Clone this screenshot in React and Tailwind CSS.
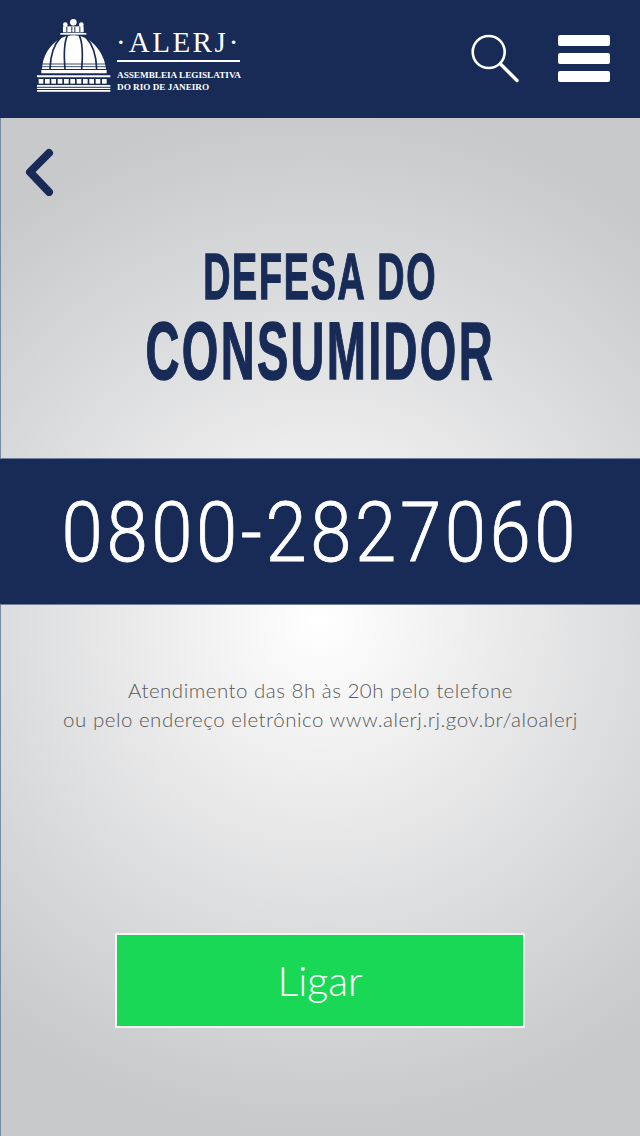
import React from "react";

function Dome() {
  return (
    <svg className="shrink-0 mt-[-10px]" width="84" height="80" viewBox="0 0 252 240" fill="#fff">
      <circle cx="124" cy="25" r="10" />
      <circle cx="100" cy="32" r="7" />
      <circle cx="148" cy="32" r="7" />
      <path d="M93 37h62v18H93z" />
      <path d="M85 57h78v5H85z" />
      <g fill="#172b56">
        <path d="M103 38h3v17h-3zM118 38h3v17h-3zM127 38h3v17h-3zM142 38h3v17h-3z" />
      </g>
      <path d="M30 165C32 112 74 64 124 64s92 48 98 101z" />
      <g fill="none" stroke="#172b56" strokeWidth="5">
        <path d="M106 65C94 90 96 130 99 165" />
        <path d="M142 65C154 90 152 130 149 165" />
        <path d="M86 70C62 95 55 130 54 165" />
        <path d="M162 70C186 95 193 130 194 165" />
      </g>
      <path d="M28 150h196" stroke="#172b56" strokeWidth="2.5" />
      <path d="M28 158h196" stroke="#172b56" strokeWidth="2.5" />
      <path d="M28 168h196v10H28z" />
      <path d="M15 184h220v6H15z" />
      {[20, 39, 58, 77, 96, 115, 134, 153, 172, 191, 210].map((x) => (
        <rect key={x} x={x} y="195" width="14" height="14" />
      ))}
      <path d="M15 213h220v5H15zM15 221h220v4H15zM15 228h220v5H15z" />
    </svg>
  );
}

export default function App() {
  return (
    <div className="w-[640px] h-[1136px] flex flex-col overflow-hidden bg-[radial-gradient(circle_at_320px_620px,#ffffff_0px,#ececed_170px,#d9dadb_340px,#c8c9cb_510px)]">
      <header className="h-[118px] shrink-0 bg-[#172b56] flex items-center pl-[32px] pr-[30px]">
        <Dome />
        <div className="w-[125px] flex flex-col items-stretch text-white font-['Liberation_Serif',serif] pt-[3px] mt-[-1px]">
          <div className="flex justify-between items-center text-[29px] leading-[30px] tracking-[2.5px] whitespace-nowrap">
            <span>·</span>
            <span>ALERJ</span>
            <span>·</span>
          </div>
          <div className="h-[2px] w-[123px] ml-px bg-white mt-[3px] mb-[7px]" />
          <div className="text-[9.2px] ml-px leading-[12px] font-bold whitespace-nowrap">ASSEMBLEIA LEGISLATIVA</div>
          <div className="text-[9.2px] ml-px leading-[12px] font-bold whitespace-nowrap">DO RIO DE JANEIRO</div>
        </div>
        <svg className="ml-auto mt-[-2px]" width="50" height="50" viewBox="0 0 50 50" fill="none" stroke="#fff" strokeLinecap="round">
          <circle cx="18.7" cy="19" r="16" strokeWidth="2.6" />
          <path d="M30.5 31l16.5 16.5" strokeWidth="3.4" />
        </svg>
        <div className="ml-[38px] w-[52px] flex flex-col gap-[7px] mt-[-1px]">
          <div className="h-[11px] rounded-[2px] bg-white" />
          <div className="h-[11px] rounded-[2px] bg-white" />
          <div className="h-[11px] rounded-[2px] bg-white" />
        </div>
      </header>

      <main className="flex-1 flex flex-col border-l border-[#7b8aa6]">
        <section className="h-[340px] relative flex flex-col items-center">
          <svg className="absolute left-[20px] top-[30px]" width="36" height="48" viewBox="0 0 36 48" fill="none" stroke="#172b56" strokeWidth="8" strokeLinecap="round" strokeLinejoin="round">
            <path d="M28 5L9 24l19 20" />
          </svg>
          <h1 className="mt-[121px] text-[#172b56] font-['Liberation_Sans',sans-serif] font-bold text-center uppercase [-webkit-text-stroke:1.4px_#172b56]">
            <div className="text-[65px] leading-[76px] tracking-[3px] scale-x-[0.58] whitespace-nowrap">Defesa do</div>
            <div className="text-[81px] leading-[72px] tracking-[4px] scale-x-[0.58] whitespace-nowrap">Consumidor</div>
          </h1>
        </section>
        <section className="h-[147px] -ml-px bg-[#172b56] border-y border-[#6f7f9c] flex items-center justify-center text-white font-['Roboto',sans-serif] font-light text-[84px] pt-[2px]">
          <span className="scale-x-[0.885] tracking-[4px] whitespace-nowrap [-webkit-text-stroke:0.8px_#ffffff]">0800-2827060</span>
        </section>
        <section className="flex-1 flex flex-col items-center">
          <p className="mt-[71px] text-center text-[#58595a] font-['Lato',sans-serif] font-light text-[20.5px] leading-[29px] tracking-[0.5px]">
            Atendimento das 8h às 20h pelo telefone
            <br />
            ou pelo endereço eletrônico www.alerj.rj.gov.br/aloalerj
          </p>
          <button className="mt-[199px] w-[410px] h-[95px] -ml-px bg-[#19d856] border-2 border-[#f2f5f2] text-white font-['Lato',sans-serif] font-light text-[41px]">
            Ligar
          </button>
        </section>
      </main>
    </div>
  );
}
